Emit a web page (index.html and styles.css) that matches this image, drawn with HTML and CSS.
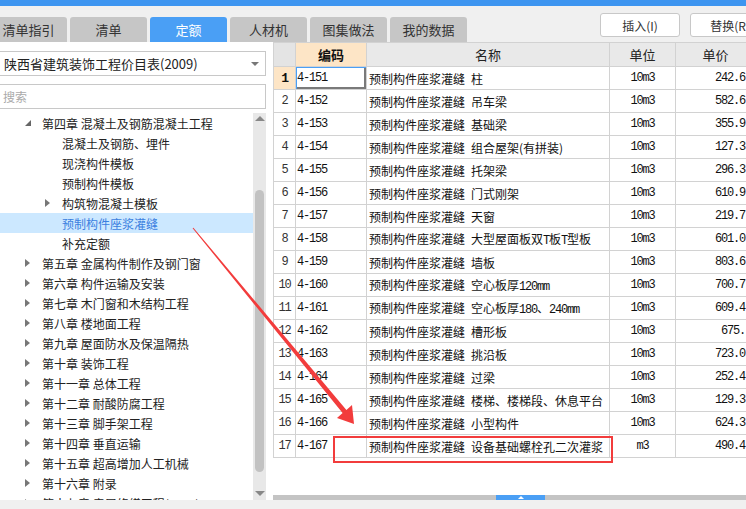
FILE: index.html
```html
<!DOCTYPE html>
<html lang="zh-CN">
<head>
<meta charset="utf-8">
<title>定额</title>
<link rel="stylesheet" href="styles.css">
</head>
<body>
<div class="app">
  <div class="topbar"></div>
  <div class="tabbar">
    <div class="tabs">
      <div class="tab">清单指引</div>
      <div class="tab">清单</div>
      <div class="tab active">定额</div>
      <div class="tab">人材机</div>
      <div class="tab">图集做法</div>
      <div class="tab">我的数据</div>
    </div>
    <div class="actions">
      <button class="btn">插入(I)</button>
      <button class="btn">替换(R)</button>
    </div>
  </div>
  <div class="main">
    <div class="left">
      <div class="select"><span>陕西省建筑装饰工程价目表(2009)</span><span class="caret"></span></div>
      <div class="search">搜索</div>
      <div class="treewrap">
        <ul class="tree">
          <li class="node l1"><span class="twisty"><i class="open"></i></span>第四章 混凝土及钢筋混凝土工程</li>
          <li class="node l2"><span class="twisty"></span>混凝土及钢筋、埋件</li>
          <li class="node l2"><span class="twisty"></span>现浇构件模板</li>
          <li class="node l2"><span class="twisty"></span>预制构件模板</li>
          <li class="node l2"><span class="twisty"><i class="closed"></i></span>构筑物混凝土模板</li>
          <li class="node l2 selected"><span class="twisty"></span>预制构件座浆灌缝</li>
          <li class="node l2"><span class="twisty"></span>补充定额</li>
          <li class="node l1"><span class="twisty"><i class="closed"></i></span>第五章 金属构件制作及钢门窗</li>
          <li class="node l1"><span class="twisty"><i class="closed"></i></span>第六章 构件运输及安装</li>
          <li class="node l1"><span class="twisty"><i class="closed"></i></span>第七章 木门窗和木结构工程</li>
          <li class="node l1"><span class="twisty"><i class="closed"></i></span>第八章 楼地面工程</li>
          <li class="node l1"><span class="twisty"><i class="closed"></i></span>第九章 屋面防水及保温隔热</li>
          <li class="node l1"><span class="twisty"><i class="closed"></i></span>第十章 装饰工程</li>
          <li class="node l1"><span class="twisty"><i class="closed"></i></span>第十一章 总体工程</li>
          <li class="node l1"><span class="twisty"><i class="closed"></i></span>第十二章 耐酸防腐工程</li>
          <li class="node l1"><span class="twisty"><i class="closed"></i></span>第十三章 脚手架工程</li>
          <li class="node l1"><span class="twisty"><i class="closed"></i></span>第十四章 垂直运输</li>
          <li class="node l1"><span class="twisty"><i class="closed"></i></span>第十五章 超高增加人工机械</li>
          <li class="node l1"><span class="twisty"><i class="closed"></i></span>第十六章 附录</li>
          <li class="node l1"><span class="twisty"><i class="closed"></i></span>第十七章 房屋修缮工程(2015)</li>
        </ul>
        <div class="vscroll"><span class="up"></span><span class="thumb"></span><span class="down"></span></div>
      </div>
    </div>
    <div class="spacer"></div>
    <div class="right">
      <div class="grid">
        <table>
          <colgroup><col class="c-rn"><col class="c-code"><col class="c-name"><col class="c-unit"><col class="c-price"></colgroup>
          <thead>
            <tr><th class="rn"></th><th class="code">编码</th><th>名称</th><th>单位</th><th>单价</th></tr>
          </thead>
          <tbody>
            <tr><td class="rn cur">1</td><td class="code sel">4-151</td><td class="name">预制构件座浆灌缝&ensp;柱</td><td class="unit">10m3</td><td class="price">242.6</td></tr>
            <tr><td class="rn">2</td><td class="code">4-152</td><td class="name">预制构件座浆灌缝&ensp;吊车梁</td><td class="unit">10m3</td><td class="price">582.6</td></tr>
            <tr><td class="rn">3</td><td class="code">4-153</td><td class="name">预制构件座浆灌缝&ensp;基础梁</td><td class="unit">10m3</td><td class="price">355.9</td></tr>
            <tr><td class="rn">4</td><td class="code">4-154</td><td class="name">预制构件座浆灌缝&ensp;组合屋架(有拼装)</td><td class="unit">10m3</td><td class="price">127.3</td></tr>
            <tr><td class="rn">5</td><td class="code">4-155</td><td class="name">预制构件座浆灌缝&ensp;托架梁</td><td class="unit">10m3</td><td class="price">296.3</td></tr>
            <tr><td class="rn">6</td><td class="code">4-156</td><td class="name">预制构件座浆灌缝&ensp;门式刚架</td><td class="unit">10m3</td><td class="price">610.9</td></tr>
            <tr><td class="rn">7</td><td class="code">4-157</td><td class="name">预制构件座浆灌缝&ensp;天窗</td><td class="unit">10m3</td><td class="price">219.7</td></tr>
            <tr><td class="rn">8</td><td class="code">4-158</td><td class="name">预制构件座浆灌缝&ensp;大型屋面板双<span class="n">T</span>板<span class="n">T</span>型板</td><td class="unit">10m3</td><td class="price">601.0</td></tr>
            <tr><td class="rn">9</td><td class="code">4-159</td><td class="name">预制构件座浆灌缝&ensp;墙板</td><td class="unit">10m3</td><td class="price">803.6</td></tr>
            <tr><td class="rn">10</td><td class="code">4-160</td><td class="name">预制构件座浆灌缝&ensp;空心板厚<span class="n">120mm</span></td><td class="unit">10m3</td><td class="price">700.7</td></tr>
            <tr><td class="rn">11</td><td class="code">4-161</td><td class="name">预制构件座浆灌缝&ensp;空心板厚<span class="n">180</span>、<span class="n">240mm</span></td><td class="unit">10m3</td><td class="price">609.4</td></tr>
            <tr><td class="rn">12</td><td class="code">4-162</td><td class="name">预制构件座浆灌缝&ensp;槽形板</td><td class="unit">10m3</td><td class="price">675.</td></tr>
            <tr><td class="rn">13</td><td class="code">4-163</td><td class="name">预制构件座浆灌缝&ensp;挑沿板</td><td class="unit">10m3</td><td class="price">723.0</td></tr>
            <tr><td class="rn">14</td><td class="code">4-164</td><td class="name">预制构件座浆灌缝&ensp;过梁</td><td class="unit">10m3</td><td class="price">252.4</td></tr>
            <tr><td class="rn">15</td><td class="code">4-165</td><td class="name">预制构件座浆灌缝&ensp;楼梯、楼梯段、休息平台</td><td class="unit">10m3</td><td class="price">129.3</td></tr>
            <tr><td class="rn">16</td><td class="code">4-166</td><td class="name">预制构件座浆灌缝&ensp;小型构件</td><td class="unit">10m3</td><td class="price">624.3</td></tr>
            <tr><td class="rn">17</td><td class="code">4-167</td><td class="name">预制构件座浆灌缝&ensp;设备基础螺栓孔二次灌浆</td><td class="unit">m3</td><td class="price">490.4</td></tr>
          </tbody>
        </table>
      </div>
      <div class="hscroll"><span class="hthumb"><i></i></span></div>
    </div>
  </div>
  <div class="statusbar"></div>
  <svg class="annot" width="746" height="509" viewBox="0 0 746 509">
    <polygon points="192.6,228.3 193.4,227.7 346.4,409.9 352,405 354,424 337,418 342.6,413.1" fill="#f23c3c"/>
    <rect x="334" y="437" width="278" height="25" fill="none" stroke="#f23c3c" stroke-width="2"/>
  </svg>
</div>
</body>
</html>
```
FILE: styles.css
```css
* { box-sizing: border-box; margin: 0; padding: 0; }
html, body { width: 746px; height: 509px; overflow: hidden; background: #f0f0f0; }
body {
  font-family: "Noto Sans CJK SC", "Liberation Sans", sans-serif;
  font-size: 12px;
  color: #1a1a1a;
}
.app { position: relative; width: 746px; height: 509px; overflow: hidden; }

.topbar { height: 6px; background: #3d95f0; }

.tabbar {
  height: 36px;
  background: #f0f0f0;
  display: flex;
  justify-content: space-between;
  align-items: flex-end;
}
.tabs { display: flex; gap: 3px; margin-left: -10px; }
.tab {
  width: 77px;
  height: 25px;
  background: #c6c6c6;
  border-radius: 3px 3px 0 0;
  font-size: 13px;
  line-height: 25px;
  text-align: center;
  color: #333;
}
.tab.active { background: #4a9ff5; color: #fff; }

.actions {
  display: flex;
  gap: 10px;
  align-self: flex-start;
  margin-top: 7px;
  margin-right: -24px;
}
.btn {
  width: 80px;
  height: 24px;
  background: #fff;
  border: 1px solid #c8c8c8;
  border-radius: 3px;
  font-family: inherit;
  font-size: 12px;
  color: #333;
}

.main { height: 458px; display: flex; background: #fff; }

.left { width: 266px; padding-top: 9px; display: flex; flex-direction: column; }
.select {
  height: 25px;
  margin-left: -1px;
  border: 1px solid #c8c8c8;
  display: flex;
  align-items: center;
  justify-content: space-between;
  padding: 0 6px 0 4px;
  font-size: 13px;
  color: #222;
}
.caret {
  width: 0; height: 0;
  border-left: 4px solid transparent;
  border-right: 4px solid transparent;
  border-top: 4px solid #777;
}
.search {
  height: 25px;
  margin-top: 8px;
  margin-left: -1px;
  border: 1px solid #c8c8c8;
  padding-left: 3px;
  line-height: 23px;
  color: #aaa;
  font-size: 12px;
}
.treewrap { flex: 1; margin-top: 4px; display: flex; overflow: hidden; }
.tree { flex: 1; list-style: none; overflow: hidden; }
.node {
  height: 20px;
  display: flex;
  align-items: center;
  white-space: nowrap;
  color: #222;
  font-size: 12px;
}
.node.l1 { padding-left: 22px; }
.node.l2 { padding-left: 42px; }
.twisty { width: 20px; height: 20px; display: flex; align-items: center; padding-left: 3px; }
.twisty .closed {
  width: 0; height: 0;
  border-top: 4px solid transparent;
  border-bottom: 4px solid transparent;
  border-left: 5px solid #777;
}
.twisty .open {
  width: 0; height: 0;
  border-style: solid;
  border-width: 0 0 6px 6px;
  border-color: transparent transparent #666 transparent;
}
.node.selected { background: #cce8ff; color: #3b7fe0; }

.vscroll {
  width: 13px;
  background: #e8e8e8;
  display: flex;
  flex-direction: column;
  align-items: center;
  padding: 3px 0 4px;
}
.vscroll .up {
  width: 0; height: 0;
  border-left: 5px solid transparent;
  border-right: 5px solid transparent;
  border-bottom: 5px solid #888;
}
.vscroll .thumb {
  margin-top: 69px;
  width: 9px;
  height: 282px;
  border-radius: 5px;
  background: #c2c2c2;
}
.vscroll .down {
  margin-top: auto;
  width: 0; height: 0;
  border-left: 5px solid transparent;
  border-right: 5px solid transparent;
  border-top: 5px solid #888;
}

.spacer { width: 7px; background: #fff; }

.right { flex: 1; display: flex; flex-direction: column; overflow: hidden; }
.grid { flex: 1; overflow: hidden; background: #fff; }

table { border-collapse: collapse; table-layout: fixed; width: 482px; }
col.c-rn { width: 22px; }
col.c-code { width: 71px; }
col.c-name { width: 243px; }
col.c-unit { width: 66px; }
col.c-price { width: 80px; }

th, td {
  border: 1px solid #d2d2d2;
  height: 23px;
  white-space: nowrap;
  overflow: hidden;
  padding: 0;
}
th {
  height: 24px;
  background: #e9e9e9;
  font-weight: normal;
  font-size: 13px;
  color: #222;
  text-align: center;
}
th.rn { background: #e4e4e4; }
th.code { background: #fde5c6; font-weight: bold; color: #111; }

td { font-size: 12px; color: #111; }
td.rn {
  text-align: center;
  font-family: "Liberation Mono", monospace;
  font-size: 12px;
  letter-spacing: -1.2px;
  color: #333;
}
td.rn.cur { background: #fde5c6; font-weight: bold; color: #111; font-size: 13px; }
td.code {
  padding-left: 1px;
  font-family: "Liberation Mono", monospace;
  font-size: 12px;
  letter-spacing: -1.2px;
}
td.code.sel { box-shadow: inset 1px 1px 0 #4a9ff5, inset -2px -2px 0 #7a7a7a; }
td.name { padding-left: 2px; }
.n { font-family: "Liberation Mono", monospace; font-size: 12px; letter-spacing: -1.2px; }
td.unit {
  text-align: center;
  font-family: "Liberation Mono", monospace;
  font-size: 12px;
  letter-spacing: -1.2px;
}
td.price {
  text-align: right;
  padding-right: 10px;
  font-family: "Liberation Mono", monospace;
  font-size: 12px;
  letter-spacing: -1.2px;
}

.hscroll { height: 5px; background: #c4c4c4; display: flex; }
.hthumb {
  margin-left: 223px;
  width: 49px;
  height: 5px;
  background: #4a9ff5;
  display: flex;
  justify-content: center;
  align-items: center;
}
.hthumb i {
  width: 0; height: 0;
  border-left: 3px solid transparent;
  border-right: 3px solid transparent;
  border-bottom: 3px solid #fff;
}

.statusbar { height: 9px; background: #f0f0f0; }

.annot { position: absolute; left: 0; top: 0; pointer-events: none; }
```
